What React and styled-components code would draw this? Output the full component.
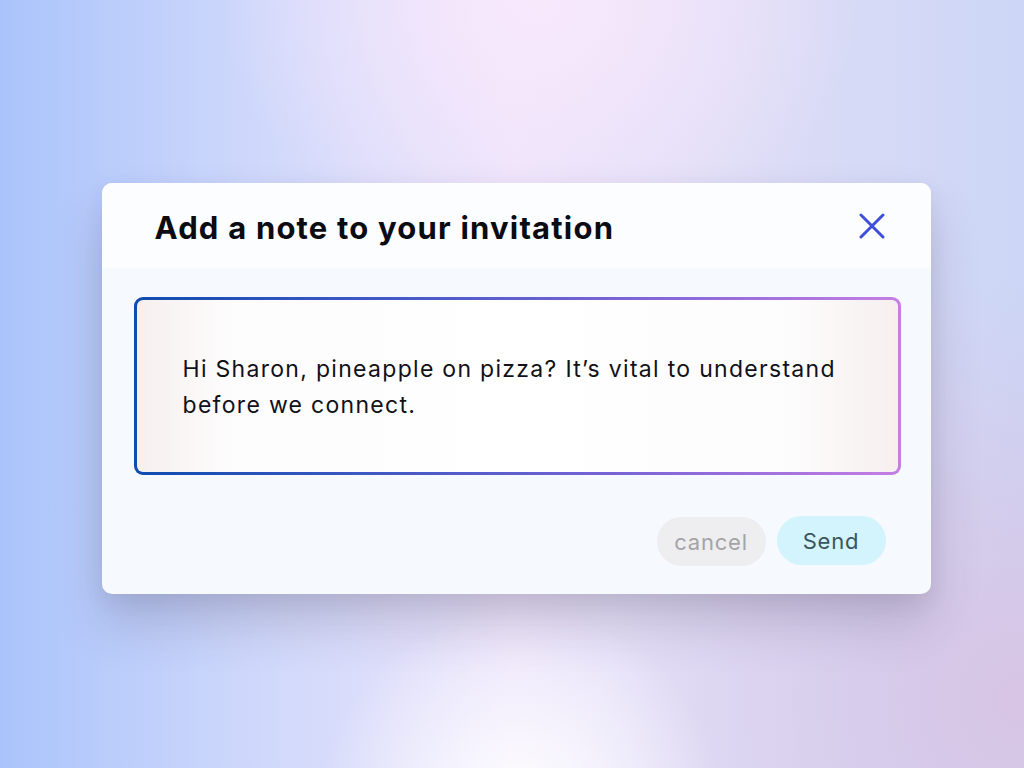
import React from 'react'
import styled, { createGlobalStyle } from 'styled-components'

const GlobalStyle = createGlobalStyle`
  html, body {
    margin: 0;
    padding: 0;
  }
  body {
    font-family: Inter, "Open Sans", "Liberation Sans", sans-serif;
  }
`

const Backdrop = styled.div`
  width: 1024px;
  height: 768px;
  display: flex;
  align-items: flex-start;
  justify-content: center;
  padding: 183px 0 0 8px;
  box-sizing: border-box;
  overflow: hidden;
  background:
    radial-gradient(ellipse 200px 190px at 520px 800px, rgba(255, 255, 255, 0.95), rgba(255, 255, 255, 0) 100%),
    radial-gradient(ellipse 320px 260px at 540px 0px, rgba(248, 232, 252, 1), rgba(248, 232, 252, 0) 100%),
    radial-gradient(ellipse 420px 420px at 1024px 700px, rgba(216, 196, 228, 1), rgba(216, 196, 228, 0) 100%),
    linear-gradient(90deg, #aac4fb 0%, #cfd8fb 25%, #ece4fb 50%, #dcdcf6 75%, #ccd6f6 100%);
`

const Card = styled.div`
  width: 829px;
  height: 411px;
  border-radius: 10px;
  background: #f6f9fd;
  box-shadow: 0 30px 50px rgba(60, 50, 80, 0.2), 0 8px 20px rgba(60, 50, 80, 0.08);
  display: flex;
  flex-direction: column;
  overflow: hidden;
`

const Header = styled.div`
  height: 85px;
  background: #fbfdff;
  display: flex;
  align-items: center;
  justify-content: space-between;
  padding: 4px 46px 0 53px;
  box-sizing: border-box;
`

const Title = styled.h1`
  margin: 0;
  font-size: 31px;
  font-weight: 700;
  color: #0b0b12;
  letter-spacing: 1.2px;
`

const CloseButton = styled.button`
  width: 26px;
  height: 26px;
  padding: 0;
  border: none;
  background: transparent;
  cursor: pointer;
  margin-top: -4px;
  display: flex;
  align-items: center;
  justify-content: center;
`

const Body = styled.div`
  flex: 1;
  display: flex;
  flex-direction: column;
  padding: 29px 30px 28px 32px;
`

const NoteBox = styled.div`
  height: 178px;
  box-sizing: border-box;
  border: 3px solid transparent;
  border-radius: 9px;
  background:
    linear-gradient(90deg, #f6efee 0%, #fdfcfc 12%, #ffffff 50%, #fdfcfc 86%, #f6efee 100%) padding-box,
    linear-gradient(90deg, #0f4cb0 0%, #3d58c4 30%, #7763d6 62%, #c57ee4 100%) border-box;
  display: flex;
  align-items: center;
  padding: 2px 40px 0 46px;
`

const NoteText = styled.p`
  margin: 0;
  max-width: 680px;
  font-size: 23px;
  line-height: 36px;
  font-weight: 400;
  letter-spacing: 1.3px;
  color: #111118;
`

const Actions = styled.div`
  display: flex;
  justify-content: flex-end;
  gap: 11px;
  margin-top: 41px;
  padding-right: 15px;
`

const PillButton = styled.button`
  width: 109px;
  height: 49px;
  border: none;
  border-radius: 25px;
  font-family: inherit;
  font-size: 22px;
  letter-spacing: 0.8px;
  cursor: pointer;
  background: ${(p) => (p.primary ? '#d3f3fd' : '#eeeef1')};
  color: ${(p) => (p.primary ? '#3a5560' : '#a3a3a8')};
  margin-top: ${(p) => (p.primary ? '0' : '1px')};
`

const CloseIcon = () => (
  <svg width="26" height="26" viewBox="0 0 26 26" fill="none">
    <path d="M2 2 L24 24 M24 2 L2 24" stroke="#3f4fd9" strokeWidth="3" strokeLinecap="round" />
  </svg>
)

const App = () => {
  return (
    <Backdrop>
      <GlobalStyle />
      <Card>
        <Header>
          <Title>Add a note to your invitation</Title>
          <CloseButton aria-label="close">
            <CloseIcon />
          </CloseButton>
        </Header>
        <Body>
          <NoteBox>
            <NoteText>
              Hi Sharon, pineapple on pizza? It’s vital to understand before we connect.
            </NoteText>
          </NoteBox>
          <Actions>
            <PillButton>cancel</PillButton>
            <PillButton primary>Send</PillButton>
          </Actions>
        </Body>
      </Card>
    </Backdrop>
  )
}

export default App
